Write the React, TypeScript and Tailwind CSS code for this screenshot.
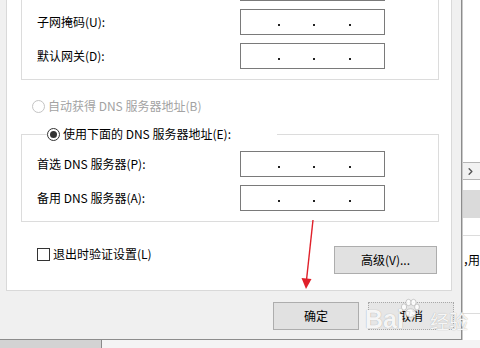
import { ChevronRight } from "lucide-react";

type FieldRowProps = {
  label: string;
  className?: string;
};

function IpBox() {
  return (
    <div className="w-[145px] h-[26px] border border-[#7a7a7a] bg-white flex items-start pt-[14px] pl-[37px]">
      <span className="w-[2px] h-[2px] bg-[#222]" />
      <span className="w-[2px] h-[2px] bg-[#222] ml-[33px]" />
      <span className="w-[2px] h-[2px] bg-[#222] ml-[34px]" />
    </div>
  );
}

function FieldRow({ label, className = "" }: FieldRowProps) {
  return (
    <div className={`flex items-center h-[26px] ${className}`}>
      <span className="w-[203px] leading-none">{label}</span>
      <IpBox />
    </div>
  );
}

function Radio({ checked, disabled }: { checked?: boolean; disabled?: boolean }) {
  return (
    <span
      className={`w-[13px] h-[13px] rounded-full border bg-white flex items-center justify-center shrink-0 ${
        disabled ? "border-[#c4c4c4]" : "border-[#333]"
      }`}
    >
      {checked && <span className="w-[7px] h-[7px] rounded-full bg-[#333]" />}
    </span>
  );
}

function WinButton({ label, dashed }: { label: string; dashed?: boolean }) {
  return (
    <div
      className={`h-[28px] flex items-center justify-center ${
        dashed
          ? "w-[86px] bg-[#e6e6e6] border border-dotted border-[#a8a8a8]"
          : "w-[86px] bg-[#e1e1e1] border border-[#adadad]"
      }`}
    >
      {label}
    </div>
  );
}

function Dialog() {
  return (
    <div className="w-[462px] h-[340px] bg-[#f0f0f0] border-r border-b border-[#8c8c8c] flex flex-col pl-[6px]">
      {/* white tab page */}
      <div className="h-[291px] mr-[9px] bg-white border-x border-b border-[#d9d9d9] pl-[14px] pr-[13px] flex flex-col">
        {/* IP group (top cut off) */}
        <div className="w-[418px] border-x border-b border-[#dcdcdc] pl-[15px] pb-[10px] flex flex-col gap-[8px]">
          <FieldRow label="" className="-mt-[25px]" />
          <FieldRow label="子网掩码(U):" />
          <FieldRow label="默认网关(D):" />
        </div>

        <div className="flex items-center h-[16px] mt-[18px] ml-[11px] gap-[3px] text-[#a3a3a3]">
          <Radio disabled />
          <span>自动获得 DNS 服务器地址(B)</span>
        </div>

        <fieldset className="w-[418px] border border-[#dcdcdc] mt-[12px] pl-[15px] pb-[10px]">
          <legend className="ml-[10px] pr-[46px]">
            <div className="flex items-center h-[16px] gap-[3px]">
              <Radio checked />
              <span>使用下面的 DNS 服务器地址(E):</span>
            </div>
          </legend>
          <div className="flex flex-col gap-[8px] pt-[9px]">
            <FieldRow label="首选 DNS 服务器(P):" />
            <FieldRow label="备用 DNS 服务器(A):" />
          </div>
        </fieldset>

        <div className="flex justify-between items-start mt-[24px]">
          <div className="flex items-center h-[14px] mt-[1px] ml-[16px] gap-[3px]">
            <span className="w-[13px] h-[13px] border border-[#333] bg-white" />
            <span>退出时验证设置(L)</span>
          </div>
          <div className="w-[103px] h-[28px] mr-[1px] bg-[#e1e1e1] border border-[#adadad] flex items-center justify-center">
            高级(V)...
          </div>
        </div>
      </div>

      <div className="flex justify-end gap-[9px] pt-[11px] pr-[7px]">
        <WinButton label="确定" />
        <WinButton label="取消" dashed />
      </div>
    </div>
  );
}

function BackWindow() {
  return (
    <div className="flex-1 h-[340px] bg-white border-l border-[#c9c9c9] flex flex-col">
      <div className="h-[162px]" />
      <div className="h-[18px] bg-[#f2f2f2] border-y border-[#b5b5b5] flex items-center pl-[2px] text-[#555]">
        <ChevronRight size={11} strokeWidth={3} />
      </div>
      <div className="h-[10px]" />
      <div className="h-[28px] bg-[#dadada]" />
      <div className="h-[18px] border-b border-[#dcdcdc]" />
      <div className="h-[78px] border-b border-[#dcdcdc] pt-[15px] whitespace-nowrap">
        <span className="inline-block w-[5px] overflow-hidden align-top">，</span>
        <span>用</span>
      </div>
    </div>
  );
}

function RedArrow() {
  return (
    <svg className="absolute left-0 top-0 pointer-events-none" width={480} height={348}>
      <line x1={313} y1={220} x2={306.5} y2={280} stroke="#e0202a" strokeWidth={1.4} />
      <polygon points="301.5,278 311.5,279 306,289" fill="#e0202a" />
    </svg>
  );
}

function Watermark() {
  return (
    <div className="absolute left-[365px] top-[298px] flex items-end text-white/90 [text-shadow:0_0_1px_#9a9a9a] pointer-events-none">
      <span className="text-[25px] font-bold leading-none font-['Liberation_Sans',sans-serif]">Bai</span>
      <svg width={20} height={24} viewBox="0 0 20 24" className="-ml-[4px] mb-[10px]">
        <g fill="#ffffff" fillOpacity={0.85} stroke="#b5b5b5" strokeWidth={0.7}>
          <ellipse cx={4} cy={9} rx={2.6} ry={3.2} />
          <ellipse cx={8.5} cy={4.5} rx={2.6} ry={3.2} />
          <ellipse cx={13.5} cy={4.5} rx={2.6} ry={3.2} />
          <ellipse cx={17} cy={9} rx={2.4} ry={3} />
          <ellipse cx={10.5} cy={15} rx={5} ry={4.2} />
        </g>
      </svg>
      <span className="text-[19px] leading-none ml-[10px] mb-[2px]">经验</span>
    </div>
  );
}

export default function App() {
  return (
    <div className="w-[480px] h-[348px] overflow-hidden relative bg-white text-[12px] text-black font-['Noto_Sans_CJK_SC','Noto_Sans',sans-serif]">
      <div className="flex h-[340px]">
        <Dialog />
        <BackWindow />
      </div>
      <div className="flex h-[8px]">
        <div className="w-[102px] bg-[#d3d3d3] border-r border-[#8a8a8a]" />
        <div className="flex-1 bg-[#f4f4f4]" />
      </div>
      <RedArrow />
      <Watermark />
    </div>
  );
}
